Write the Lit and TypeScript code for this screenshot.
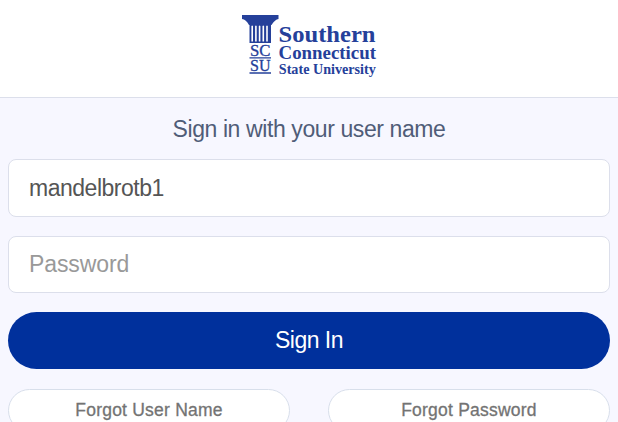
import { LitElement, html, svg, css } from "lit";
import { customElement, property } from "lit/decorators.js";

@customElement("university-logo")
class UniversityLogo extends LitElement {
  static styles = css`
    :host { display: block; width: 138px; height: 66px; }
    svg { display: block; fill: #25409a; font-family: "Liberation Serif", serif; }
    .name { font-weight: 700; }
    .monogram { font-size: 16.5px; stroke: #25409a; stroke-width: 0.3px; }
  `;

  render() {
    const flutes = [9.4, 13.1, 16.8, 20.5, 24.2];
    return html`<svg width="138" height="66" viewBox="0 0 138 66">
      <path d="M0 1H36.5V5Q33 5.500 29.500 11H7Q4 5.500 0 5Z" />
      <path d="M7.500 9H29V29H7.500Z" />
      ${flutes.map((x) => svg`<path d="M${x} 27.500V12q.8-1.200 1.600 0V27.500Z" fill="#fff" />`)}
      <path d="M7.500 43.300H29V44.500H7.500ZM7.500 58.200H29V59.800H7.500Z" />
      <text class="monogram" x="8" y="42" textLength="20.500" lengthAdjust="spacingAndGlyphs">SC</text>
      <text class="monogram" x="8" y="56.500" textLength="20.500" lengthAdjust="spacingAndGlyphs">SU</text>
      <text class="name" x="36.500" y="27.500" font-size="23.500" textLength="97" lengthAdjust="spacingAndGlyphs">Southern</text>
      <text class="name" x="36.500" y="44.800" font-size="18.500" textLength="97.500" lengthAdjust="spacingAndGlyphs">Connecticut</text>
      <text class="name" x="36.800" y="59.700" font-size="14" textLength="97" lengthAdjust="spacingAndGlyphs">State University</text>
    </svg>`;
  }
}

@customElement("app-root")
class AppRoot extends LitElement {
  @property() username = "mandelbrotb1";

  static styles = css`
    :host {
      display: block; height: 422px; overflow: hidden; background: #f7f7ff;
      font-family: "Liberation Sans", Arial, sans-serif;
    }
    * { box-sizing: border-box; }
    header {
      height: 98px; padding: 14px 0 0 4px; display: flex; justify-content: center;
      background: #fff; border-bottom: 1px solid #dcdfeb;
    }
    form { display: flex; flex-direction: column; padding: 0 8px; }
    h1 {
      margin: 0; height: 61px; line-height: 62px; text-align: center;
      font-size: 23px; font-weight: 400; letter-spacing: -0.4px; color: #505d78;
    }
    input {
      display: block; width: 100%; height: 57px; margin: 0 0 19px; padding: 0 20px;
      border: 1px solid #dcdfeb; border-radius: 8px; background: #fff; outline: none;
      font: 23px "Liberation Sans", Arial, sans-serif; color: #555;
    }
    .user { height: 58px; letter-spacing: -0.48px; }
    input::placeholder { color: #999; opacity: 1; letter-spacing: -0.1px; }
    button { font-family: inherit; padding: 0; border: 0; }
    .submit {
      height: 57px; border-radius: 29px; background: #00309c; color: #fff;
      font-size: 23px; letter-spacing: -0.5px;
    }
    .links { display: flex; gap: 38px; margin-top: 20px; }
    .links button {
      flex: 1; height: 43px; border: 1px solid #d8dfeb; border-radius: 22px; background: #fff;
      color: #737373; font-size: 17.5px; letter-spacing: 0.22px; -webkit-text-stroke: 0.3px #737373;
    }
  `;

  render() {
    return html`
      <header><university-logo></university-logo></header>
      <form @submit=${(e: Event) => e.preventDefault()}>
        <h1>Sign in with your user name</h1>
        <input class="user" .value=${this.username} aria-label="User name" />
        <input type="password" placeholder="Password" />
        <button class="submit">Sign In</button>
        <div class="links">
          <button type="button">Forgot User Name</button>
          <button type="button">Forgot Password</button>
        </div>
      </form>
    `;
  }
}
